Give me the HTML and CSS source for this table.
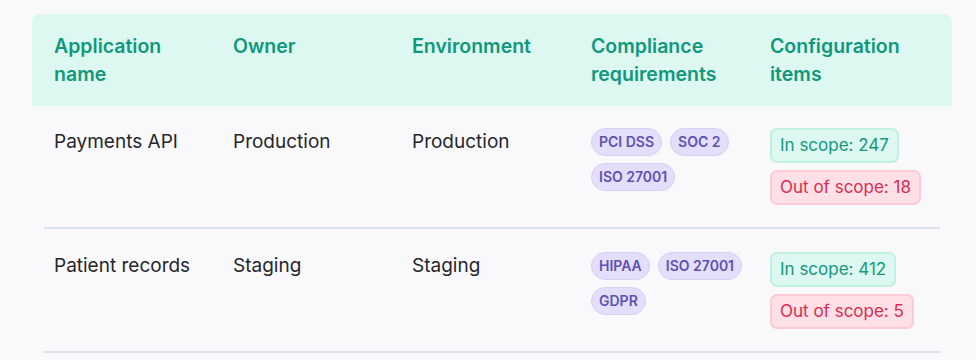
FILE: index.html
```html
<!doctype html>
<html lang="en">
<head>
  <meta charset="utf-8">
  <title>Applications</title>
  <link rel="stylesheet" href="styles.css">
</head>
<body>
  <div class="table">
    <div class="table-head">
      <div>Application name</div>
      <div>Owner</div>
      <div>Environment</div>
      <div>Compliance requirements</div>
      <div>Configuration items</div>
    </div>
    <div class="table-row">
      <div>Payments API</div>
      <div>Production</div>
      <div>Production</div>
      <div class="tags">
        <span class="tag">PCI DSS</span>
        <span class="tag">SOC 2</span>
        <span class="tag">ISO 27001</span>
      </div>
      <div class="scope">
        <span class="pill in">In scope: 247</span>
        <span class="pill out">Out of scope: 18</span>
      </div>
    </div>
    <div class="table-row">
      <div>Patient records</div>
      <div>Staging</div>
      <div>Staging</div>
      <div class="tags">
        <span class="tag">HIPAA</span>
        <span class="tag">ISO 27001</span>
        <span class="tag">GDPR</span>
      </div>
      <div class="scope">
        <span class="pill in">In scope: 412</span>
        <span class="pill out">Out of scope: 5</span>
      </div>
    </div>
  </div>
</body>
</html>
```

FILE: styles.css
```css
:root {
  --bg: #f9f9fc;
  --text: #26262b;
  --teal: #11987c;
  --head-bg: #dcf8f1;
  --divider: #dde1e8;
}
body {
  margin: 0;
  padding: 14px 24px 0 32px;
  background: var(--bg);
  color: var(--text);
  font-family: 'Inter', sans-serif;
  font-size: 19px;
  line-height: 28px;
}
.table-head {
  display: grid;
  grid-template-columns: repeat(5, 179px);
  padding: 18px 22px;
  background: var(--head-bg);
  border-radius: 8px 8px 0 0;
  color: var(--teal);
  font-size: 19.5px;
  font-weight: 600;
}
.table-head div {
  padding-right: 20px;
}
.table-row {
  display: grid;
  grid-template-columns: repeat(5, 179px);
  margin: 0 12px;
  padding: 22px 10px 22px;
  border-bottom: 2px solid var(--divider);
}
.table-row + .table-row {
  padding-top: 23px;
}
.tags {
  display: flex;
  flex-wrap: wrap;
  align-content: flex-start;
  gap: 7px 8px;
}
.tag {
  display: inline-block;
  height: 28px;
  box-sizing: border-box;
  padding: 0 7px;
  border: 1px solid #d8cff6;
  border-radius: 14px;
  background: #e3defa;
  color: #5d52b2;
  font-size: 14px;
  font-weight: 600;
  line-height: 26px;
}
.scope {
  display: flex;
  flex-direction: column;
  align-items: flex-start;
  gap: 7px;
}
.pill {
  height: 35px;
  box-sizing: border-box;
  padding: 0 8px;
  border: 2px solid;
  border-radius: 7px;
  font-size: 17px;
  line-height: 31px;
}
.pill.in {
  background: #dcf8f1;
  border-color: #bff0e2;
  color: #16977c;
}
.pill.out {
  background: #ffe0e6;
  border-color: #fdcbd5;
  color: #dc2a52;
}
```
